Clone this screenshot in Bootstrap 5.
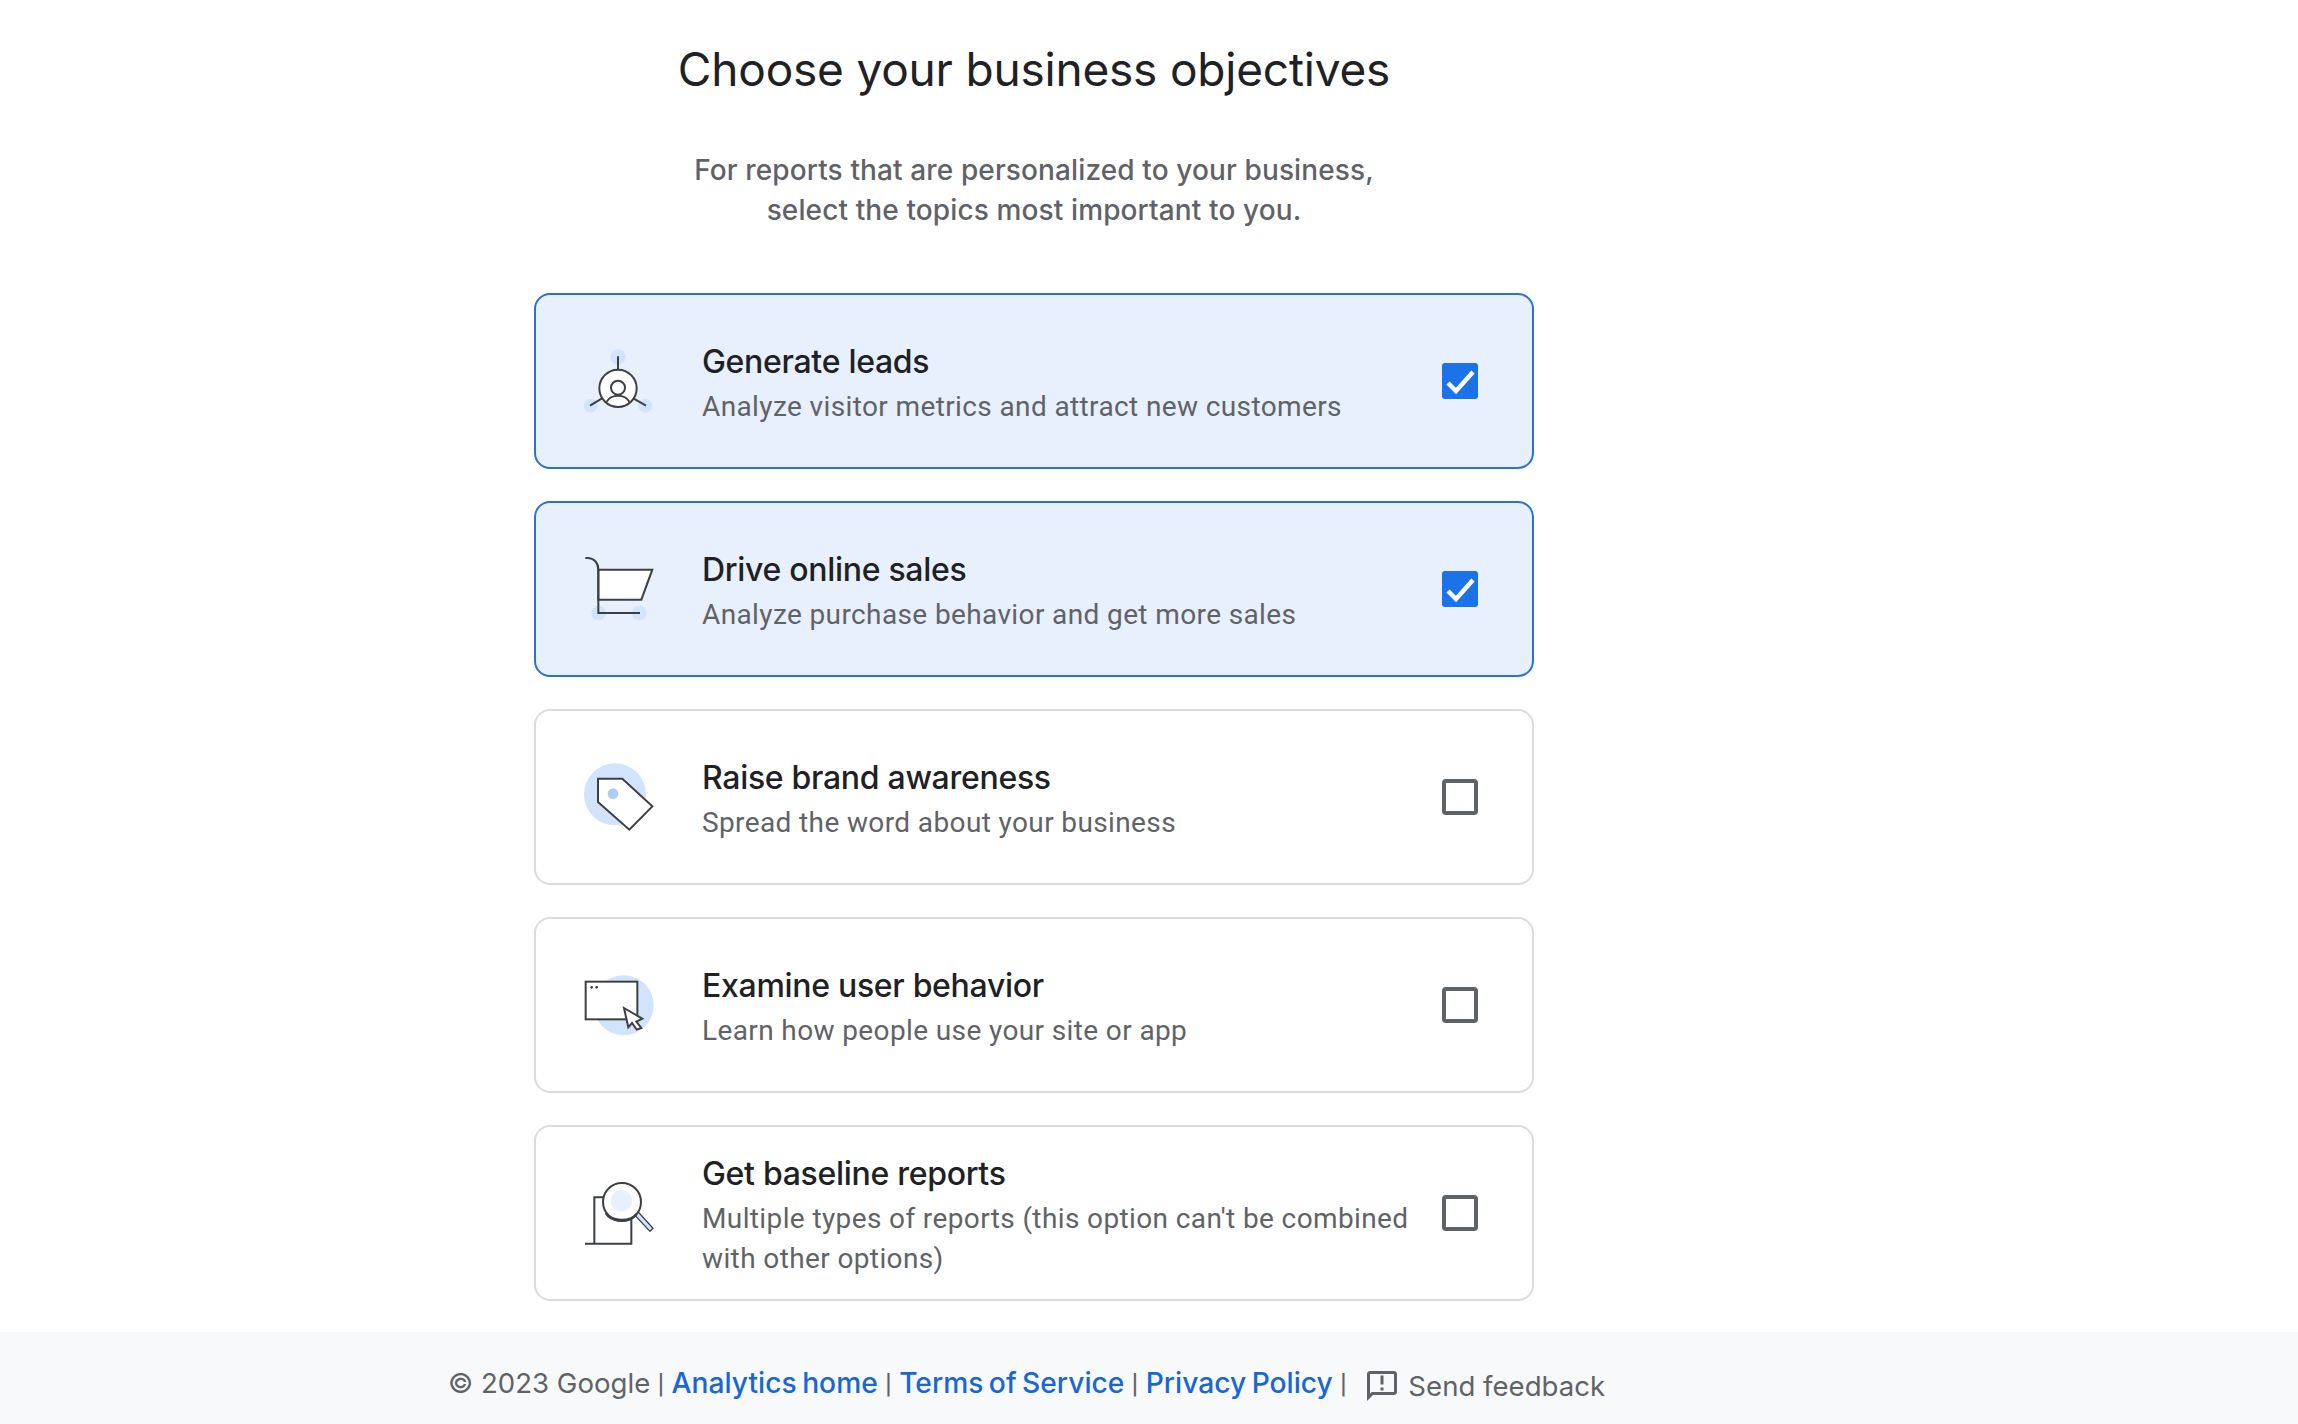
<!doctype html>
<html lang="en"><head><meta charset="utf-8"><title>Choose your business objectives</title>
<link href="https://cdn.jsdelivr.net/npm/bootstrap@5.3.0/dist/css/bootstrap.min.css" rel="stylesheet">
<style>
:root{--gs:"Inter","Open Sans",sans-serif}
html,body{height:100%}
body{background:#fff;width:2298px;height:1424px;overflow:hidden;font-family:Roboto,sans-serif;color:#202124}
.page-main{width:1000px;margin-left:534px;height:1332px}
.obj-title{font-family:var(--gs);font-size:46px;line-height:60px;font-weight:400;color:#202124;margin:0;padding-top:39px;letter-spacing:-.2px}
.obj-sub{font-family:var(--gs);font-size:28px;line-height:40px;font-weight:500;color:#5f6368;margin:51px 0 0;letter-spacing:.12px}
.obj-list{margin-top:63px;gap:32px}
.obj-card{height:176px;border:2px solid #dadce0;border-radius:16px;padding-left:42px;padding-right:54px;background:#fff}
.obj-card.on{background:#e8f0fe;border-color:#2a72cc}
.obj-icon{width:80px;height:80px;flex:none;margin-right:44px}
.obj-text{padding-top:4px}
.obj-name{font-family:var(--gs);font-size:32px;line-height:44px;font-weight:500;color:#202124;letter-spacing:-.3px;margin-bottom:3px}
.obj-desc{font-family:Roboto,sans-serif;font-size:28px;line-height:40px;color:#5f6368;letter-spacing:.38px}
.obj-check{width:36px;height:36px;flex:none;margin-left:30px}
.page-foot{height:92px;background:#f8f9fa;font-family:var(--gs);font-size:27.6px;color:#5f6368;padding-left:448px;padding-top:11px}
.foot-links{word-spacing:-2px}
.foot-copy{word-spacing:0}
.foot-sep{font-family:Roboto,sans-serif;font-size:28px;margin:0 1.5px}
.page-foot a{color:#1967d2;text-decoration:none;font-weight:500;font-size:28.2px}
.foot-fb{margin-left:16px;position:relative;top:3px}
.s{stroke:#3c4043;stroke-width:6;fill:none;stroke-linejoin:miter}
.w{fill:#fff}.b{fill:#d2e3fc}
</style></head><body>
<main class="page-main d-flex flex-column">
<h1 class="obj-title text-center">Choose your business objectives</h1>
<p class="obj-sub text-center">For reports that are personalized to your business,<br>select the topics most important to you.</p>
<div class="obj-list d-flex flex-column">

<div class="obj-card on d-flex align-items-center">
<svg class="obj-icon" viewBox="144 152 240 240" aria-hidden="true"><circle class="b" cx="264" cy="200" r="23"/><circle class="b" cx="182" cy="346" r="21"/><circle class="b" cx="346" cy="346" r="21"/><path class="s" d="M264 198V238M180 346 216 324M348 346 310 324"/><circle class="s w" cx="264" cy="294" r="56"/><path class="s w" d="M230 334c8-14 20-18 34-18s26 4 34 18"/><circle class="s w" cx="264" cy="292" r="21"/></svg>
<div class="obj-text flex-grow-1"><div class="obj-name">Generate leads</div><div class="obj-desc">Analyze visitor metrics and attract new customers</div></div>
<svg class="obj-check" viewBox="0 0 36 36" aria-hidden="true"><rect width="36" height="36" rx="3" fill="#1a73e8"/><path d="M6 20l8 8L31 9" fill="none" stroke="#fff" stroke-width="4.500"/></svg>
</div>

<div class="obj-card on d-flex align-items-center">
<svg class="obj-icon" viewBox="144 146 240 240" aria-hidden="true"><circle class="b" cx="206" cy="338" r="22"/><circle class="b" cx="328" cy="338" r="22"/><path class="s w" d="M205 208H367L334 298H205Z"/><path class="s" d="M166 173h6c20 0 33 14 33 35V338H330"/></svg>
<div class="obj-text flex-grow-1"><div class="obj-name">Drive online sales</div><div class="obj-desc">Analyze purchase behavior and get more sales</div></div>
<svg class="obj-check" viewBox="0 0 36 36" aria-hidden="true"><rect width="36" height="36" rx="3" fill="#1a73e8"/><path d="M6 20l8 8L31 9" fill="none" stroke="#fff" stroke-width="4.500"/></svg>
</div>

<div class="obj-card d-flex align-items-center">
<svg class="obj-icon" viewBox="144 140 240 240" aria-hidden="true"><circle class="b" cx="255" cy="252" r="93"/><path class="s w" d="M204 205H277L367 288 298 358 204 275Z"/><circle cx="249" cy="250" r="16" fill="#aecbfa"/></svg>
<div class="obj-text flex-grow-1"><div class="obj-name">Raise brand awareness</div><div class="obj-desc">Spread the word about your business</div></div>
<svg class="obj-check" viewBox="0 0 36 36" aria-hidden="true"><rect x="2" y="2" width="32" height="32" rx="2" fill="none" stroke="#5f6368" stroke-width="4"/></svg>
</div>

<div class="obj-card d-flex align-items-center">
<svg class="obj-icon" viewBox="144 133 240 240" aria-hidden="true"><circle class="b" cx="281" cy="254" r="90"/><rect class="s w" x="167" y="183" width="155" height="113"/><circle cx="185" cy="200" r="4" fill="#3c4043"/><circle cx="200" cy="200" r="4" fill="#3c4043"/><path class="s w" d="M282 262 337 294 319 303 334 322 320 327 306 307 295 320Z"/></svg>
<div class="obj-text flex-grow-1"><div class="obj-name">Examine user behavior</div><div class="obj-desc">Learn how people use your site or app</div></div>
<svg class="obj-check" viewBox="0 0 36 36" aria-hidden="true"><rect x="2" y="2" width="32" height="32" rx="2" fill="none" stroke="#5f6368" stroke-width="4"/></svg>
</div>

<div class="obj-card d-flex align-items-center">
<svg class="obj-icon" viewBox="144 158 240 240" aria-hidden="true"><path class="s" d="M165 370H304V285M193 370V231H225"/><path d="M313 283 325 275 369 324 360 333Z" fill="#d2e3fc" stroke="#3c4043" stroke-width="4"/><circle class="s w" cx="276" cy="245" r="57"/><circle cx="274" cy="241" r="32" fill="#e8f0fe"/><path d="M228 278c14 26 70 30 92 3" fill="none" stroke="#3c4043" stroke-width="8"/></svg>
<div class="obj-text flex-grow-1"><div class="obj-name">Get baseline reports</div><div class="obj-desc">Multiple types of reports (this option can't be combined with other options)</div></div>
<svg class="obj-check" viewBox="0 0 36 36" aria-hidden="true"><rect x="2" y="2" width="32" height="32" rx="2" fill="none" stroke="#5f6368" stroke-width="4"/></svg>
</div>
</div>
</main>
<footer class="page-foot d-flex align-items-center">
<span class="foot-links text-nowrap"><span class="foot-copy">© 2023 Google</span> <span class="foot-sep">|</span> <a href="#">Analytics home</a> <span class="foot-sep">|</span> <a href="#">Terms of Service</a> <span class="foot-sep">|</span> <a href="#">Privacy Policy</a> <span class="foot-sep">|</span></span>
<span class="foot-fb d-inline-flex align-items-center gap-2 text-nowrap"><svg width="36" height="36" viewBox="0 0 24 24" fill="#5f6368" aria-hidden="true"><path d="M20 2H4c-1.100 0-2 .9-2 2v18l4-4h14c1.100 0 2-.9 2-2V4c0-1.100-.9-2-2-2zm0 14H5.170L4 17.170V4h16v12z"/><path d="M11 5h2v6h-2zM11 13h2v2h-2z"/></svg>Send feedback</span>
</footer>
<script src="https://cdn.jsdelivr.net/npm/bootstrap@5.3.0/dist/js/bootstrap.bundle.min.js"></script>
</body></html>
